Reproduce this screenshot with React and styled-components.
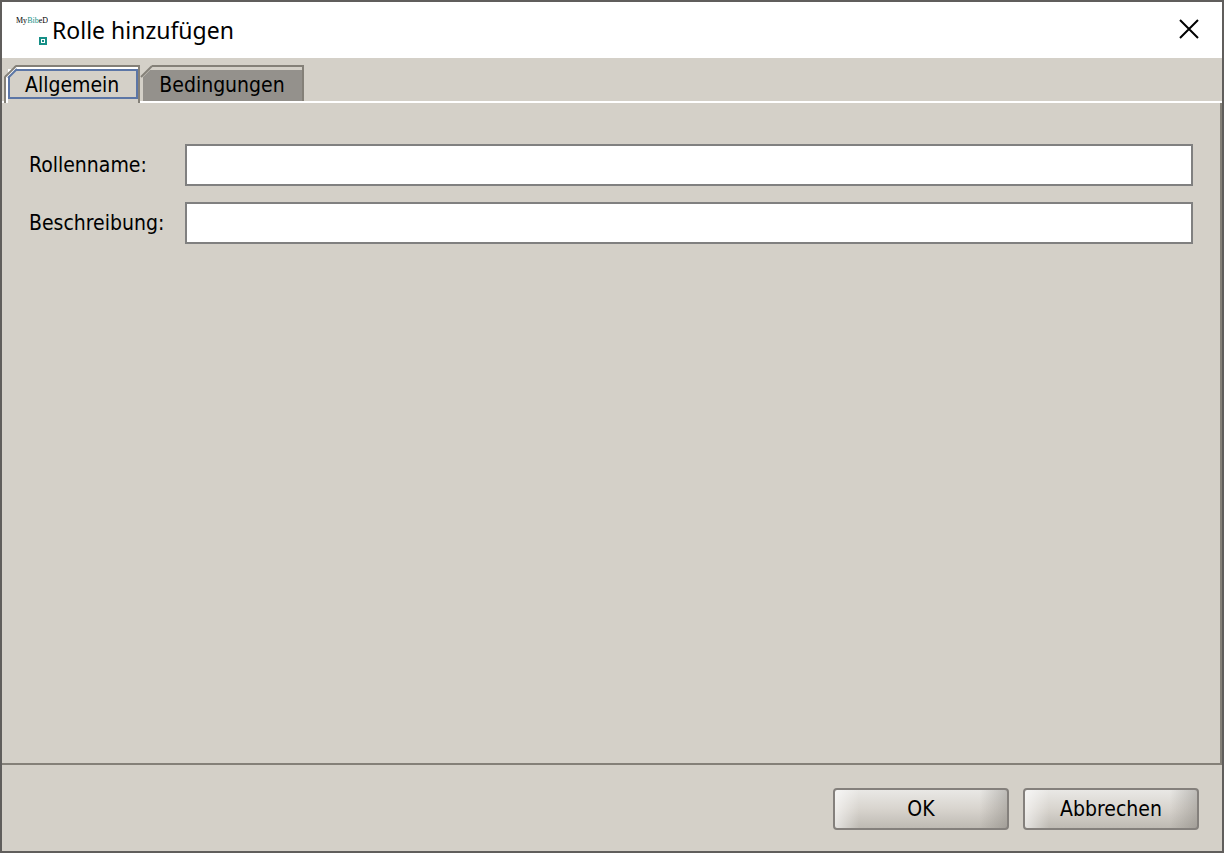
import React, { useState } from 'react'
import styled, { createGlobalStyle } from 'styled-components'

const GlobalStyle = createGlobalStyle`
  * {
    box-sizing: border-box;
  }

  body {
    margin: 0;
    font-family: 'DejaVu Sans Condensed', 'Noto Sans', sans-serif;
    font-size: 21px;
    color: #000;
  }
`

const StyledDialog = styled.main`
  min-height: 100vh;
  display: flex;
  flex-direction: column;
  background: #d4d0c8;
  border: 2px solid #605e5c;
`

const TitleBar = styled.header`
  display: flex;
  align-items: center;
  height: 56px;
  padding: 0 20px 0 14px;
  background: #fff;

  h1 {
    flex: 1;
    margin: 0 0 0 4px;
    font-family: 'Noto Sans', 'Open Sans', sans-serif;
    font-size: 23px;
    font-weight: 400;
    line-height: 32px;
  }
`

const CloseButton = styled.button`
  display: flex;
  padding: 0;
  border: 0;
  background: transparent;
`

const TabList = styled.div`
  display: flex;
  align-items: flex-end;
  height: 45px;
  padding-left: 2px;
  box-shadow: inset 0 -2px #fff;
`

const StyledTab = styled.button`
  position: relative;
  height: ${({ $active }) => ($active ? '38px' : '36px')};
  margin: ${({ $active }) => ($active ? '0' : '0 0 2px')};
  padding: ${({ $active }) => ($active ? '0 0 0 4px' : '0')};
  border: 0;
  border-top: 2px solid #848078;
  border-right: 2px solid #848078;
  background: ${({ $active }) => ($active ? '#d4d0c8' : '#94918c')};
  box-shadow: ${({ $active }) =>
    $active
      ? 'inset 2px 0 #848078, inset 4px 0 #fff, inset 0 2px #fff'
      : 'inset 3px 3px #d4d0c8'};
  color: #000;
  font: inherit;
  line-height: 28px;
  outline: 0;

  // Label with the focus frame
  > span {
    display: block;
    height: 30px;
    margin: ${({ $active }) => ($active ? '2px 0 4px' : '2px 0')};
    padding: ${({ $active }) => ($active ? '0 17px 0 15px' : '2px 17px 0 19px')};
    border: ${({ $active }) => ($active ? '2px solid #5c76a6' : '0')};
  }
`

// Lies over the square corner of the tab and cuts it
const TabCorner = styled.svg`
  position: absolute;
  top: -2px;
  left: 0;
`

const Panel = styled.section`
  flex: 1;
  padding: 41px 27px 0;
  border-right: 2px solid #848078;
  border-bottom: 2px solid #848078;
`

const Form = styled.form`
  display: grid;
  grid-template-columns: 140px minmax(0, 1fr);
  align-items: center;
  gap: 16px;

  label {
    line-height: 28px;
    white-space: nowrap;
  }
`

const TextField = styled.input`
  width: 100%;
  height: 42px;
  padding: 0 8px;
  border: 2px solid #808080;
  border-radius: 0;
  background: #fff;
  font: inherit;
  outline: 0;
`

const Footer = styled.footer`
  display: flex;
  justify-content: flex-end;
  gap: 14px;
  padding: 23px 23px 21px;
`

const DialogButton = styled.button`
  width: 176px;
  height: 42px;
  padding: 0;
  border: 2px solid #84807c;
  border-radius: 4px;
  background:
    linear-gradient(to right, rgba(255, 255, 255, 0.6), transparent 14%, transparent 84%, rgba(110, 106, 100, 0.35)),
    linear-gradient(#e9e8e5, #d8d4ce 50%, #bebab3);
  color: #000;
  font: inherit;
`

const Logo = () => (
  <svg width='32' height='32' viewBox='0 0 32 32' aria-hidden='true'>
    <text x='0' y='9' fontFamily='Liberation Serif, serif' fontSize='8'>
      My<tspan fill='#168f87'>Bib</tspan>eD
    </text>
    <path d='M23 23h8v8h-8z' fill='#168f87' />
    <path d='M25 25h4v4h-4z' fill='#fff' />
    <path d='M26 26h2v2h-2z' fill='#168f87' />
  </svg>
)

const Tab = ({ active, children, onClick }) => (
  <StyledTab type='button' role='tab' aria-selected={active} $active={active} onClick={onClick}>
    <TabCorner width='14' height='14' viewBox='0 0 14 14' fill='none' aria-hidden='true'>
      <path d={active ? 'M0 0H12L0 12z' : 'M0 0H12V3L3 12V14H0z'} fill='#d4d0c8' />
      {active && <path d='M2 12L12 2V4L4 12z M4 4H12L4 12z' fill='#fff' />}
      <path d='M1 12L12 1' stroke='#848078' strokeWidth='2' />
      {active && <path d='M4 13L13 4' stroke='#5c76a6' strokeWidth='2' />}
    </TabCorner>
    <span>{children}</span>
  </StyledTab>
)

const fields = [
  { id: 'name', label: 'Rollenname:' },
  { id: 'description', label: 'Beschreibung:' }
]

const tabs = ['Allgemein', 'Bedingungen']

const App = () => {
  const [activeTab, setActiveTab] = useState(tabs[0])

  return (
    <StyledDialog>
      <GlobalStyle />
      <TitleBar>
        <Logo />
        <h1>Rolle hinzufügen</h1>
        <CloseButton type='button' aria-label='Schließen'>
          <svg width='26' height='26' viewBox='0 0 26 26'>
            <path d='M4 3L22 21M22 3L4 21' stroke='#000' strokeWidth='2' />
          </svg>
        </CloseButton>
      </TitleBar>

      <TabList role='tablist'>
        {tabs.map((tab) => (
          <Tab key={tab} active={tab === activeTab} onClick={() => setActiveTab(tab)}>
            {tab}
          </Tab>
        ))}
      </TabList>

      <Panel role='tabpanel'>
        {activeTab === tabs[0] && (
          <Form>
            {fields.map(({ id, label }) => (
              <React.Fragment key={id}>
                <label htmlFor={id}>{label}</label>
                <TextField id={id} type='text' />
              </React.Fragment>
            ))}
          </Form>
        )}
      </Panel>

      <Footer>
        <DialogButton type='button'>OK</DialogButton>
        <DialogButton type='button'>Abbrechen</DialogButton>
      </Footer>
    </StyledDialog>
  )
}

export default App
